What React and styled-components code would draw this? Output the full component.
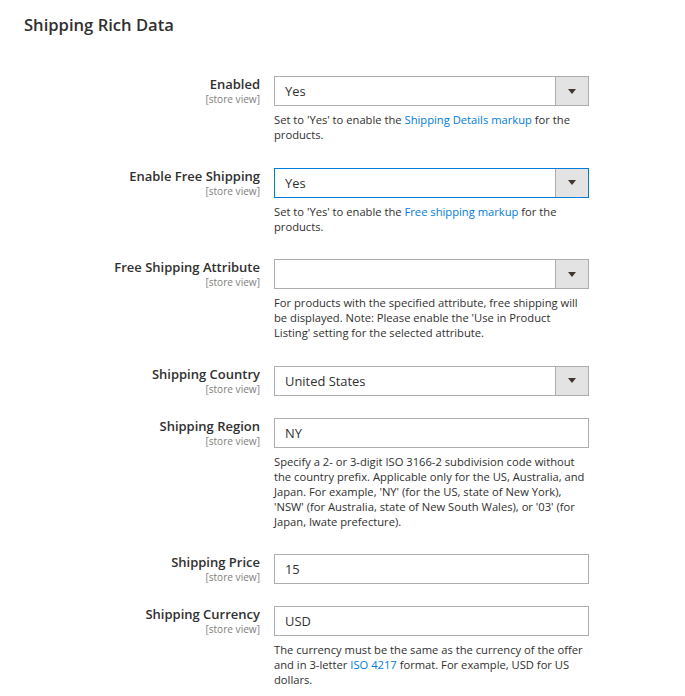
import React from 'react'
import { createGlobalStyle, styled } from 'styled-components'

const Global = createGlobalStyle`
  body {
    margin: 0;
    background: #fff;
    font-family: "Open Sans", "Liberation Sans", sans-serif;
    color: #303030;
  }
`

const Page = styled.div`
  width: 685px;
  padding: 13px 0 20px;
`

const Title = styled.h2`
  margin: 0 0 39px 24px;
  font-size: 16.6px;
  line-height: 24px;
  font-weight: 600;
  color: #303030;
`

const Row = styled.div`
  display: grid;
  grid-template-columns: 260px 315px;
  column-gap: 14px;
  padding-bottom: 22px;
`

const Label = styled.div`
  text-align: right;
`

const LabelText = styled.div`
  font-size: 13px;
  font-weight: 600;
  line-height: 16px;
  color: #303030;
`

const Scope = styled.div`
  font-size: 10.1px;
  line-height: 14px;
  color: #808080;
`

const Control = styled.div`
  display: flex;
  flex-direction: column;
`

const Box = styled.div`
  box-sizing: border-box;
  height: 30px;
  display: flex;
  align-items: stretch;
  border: 1px solid ${p => (p.$focus ? '#007bdb' : '#adadad')};
  background: #fff;
`

const Value = styled.div`
  flex: 1;
  display: flex;
  align-items: center;
  padding-left: 10px;
  font-size: 12.9px;
  color: #303030;
`

const Arrow = styled.div`
  width: 32px;
  display: flex;
  align-items: center;
  justify-content: center;
  background: #e3e3e3;
  border-left: 1px solid #adadad;

  &::after {
    content: '';
    border-left: 4.5px solid transparent;
    border-right: 4.5px solid transparent;
    border-top: 5px solid #41362f;
  }
`

const Note = styled.div`
  margin: 6px 0 3.5px;
  font-size: 11.2px;
  line-height: 15px;
  color: #303030;
`

const Link = styled.a`
  color: #007bdb;
  text-decoration: none;
`

const fields = [
  {
    label: 'Enabled',
    value: 'Yes',
    select: true,
    note: <>Set to 'Yes' to enable the <Link href="#">Shipping Details markup</Link> for the products.</>,
  },
  {
    label: 'Enable Free Shipping',
    value: 'Yes',
    select: true,
    focus: true,
    note: <>Set to 'Yes' to enable the <Link href="#">Free shipping markup</Link> for the products.</>,
  },
  {
    label: 'Free Shipping Attribute',
    value: '',
    select: true,
    note: "For products with the specified attribute, free shipping will be displayed. Note: Please enable the 'Use in Product Listing' setting for the selected attribute.",
  },
  { label: 'Shipping Country', value: 'United States', select: true },
  {
    label: 'Shipping Region',
    value: 'NY',
    note: "Specify a 2- or 3-digit ISO 3166-2 subdivision code without the country prefix. Applicable only for the US, Australia, and Japan. For example, 'NY' (for the US, state of New York), 'NSW' (for Australia, state of New South Wales), or '03' (for Japan, Iwate prefecture).",
  },
  { label: 'Shipping Price', value: '15' },
  {
    label: 'Shipping Currency',
    value: 'USD',
    note: <>The currency must be the same as the currency of the offer and in 3-letter <Link href="#">ISO 4217</Link> format. For example, USD for US dollars.</>,
  },
]

const App = () => {
  return (
    <Page>
      <Global />
      <Title>Shipping Rich Data</Title>
      {fields.map(f => (
        <Row key={f.label}>
          <Label>
            <LabelText>{f.label}</LabelText>
            <Scope>[store view]</Scope>
          </Label>
          <Control>
            <Box $focus={f.focus}>
              <Value>{f.value}</Value>
              {f.select && <Arrow />}
            </Box>
            {f.note && <Note>{f.note}</Note>}
          </Control>
        </Row>
      ))}
    </Page>
  )
}

export default App
